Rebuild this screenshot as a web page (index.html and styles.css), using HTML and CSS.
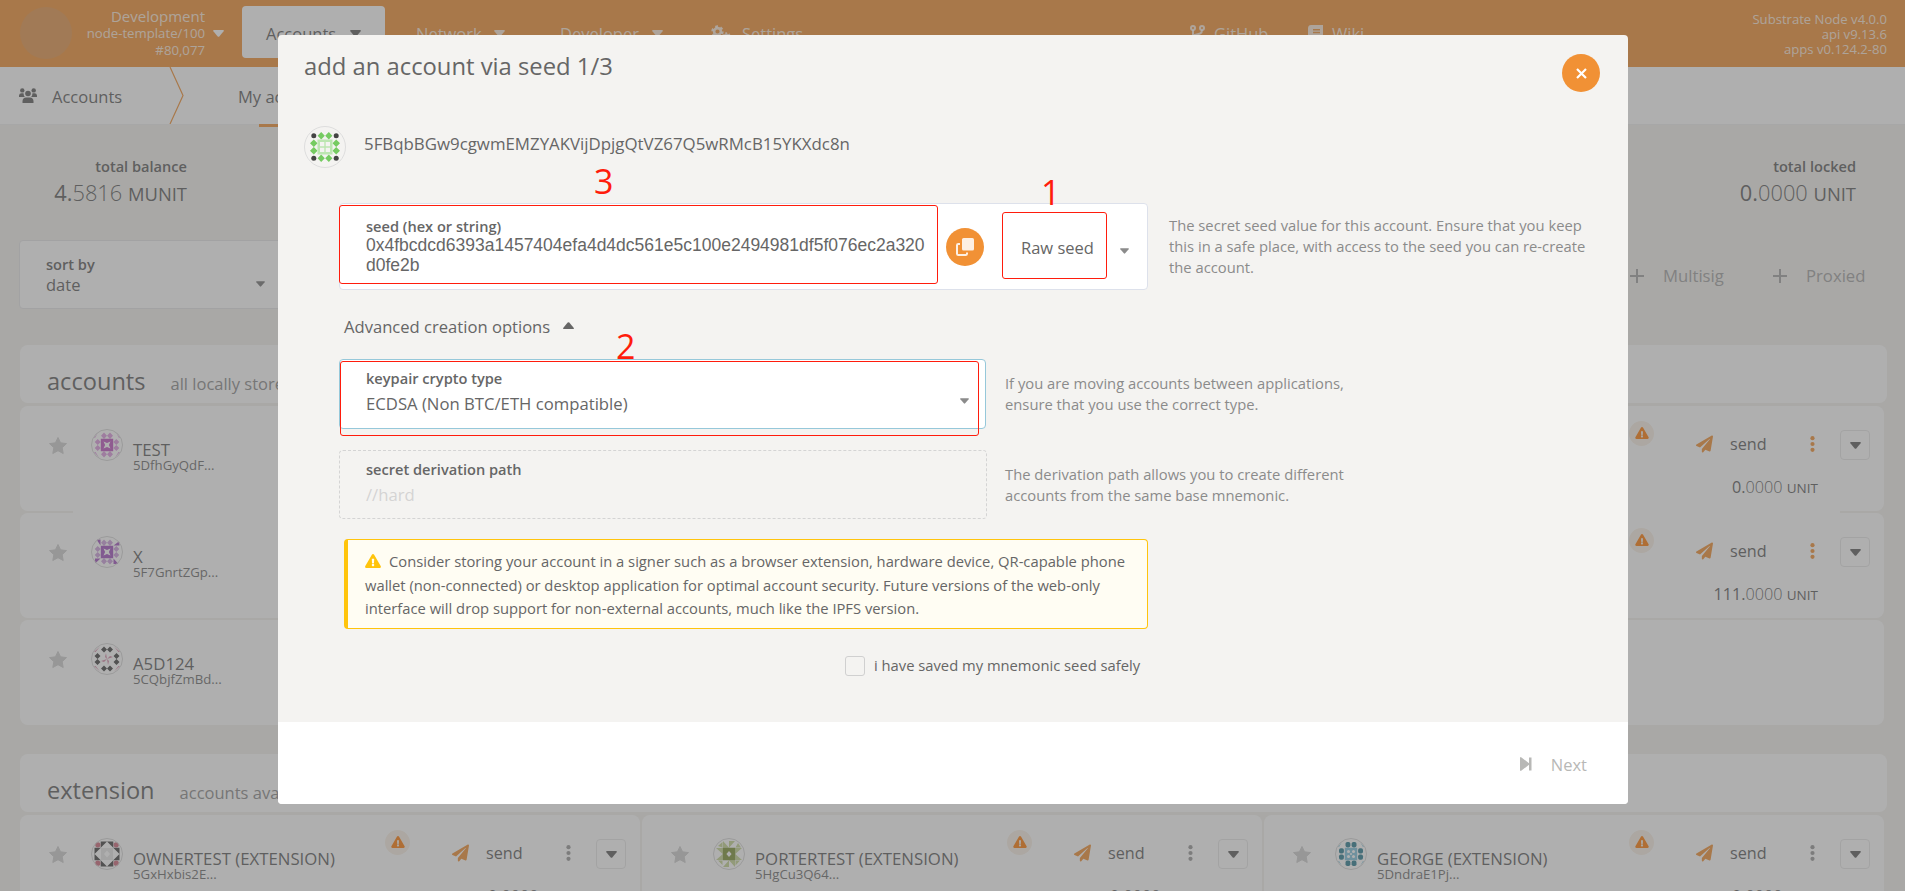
FILE: index.html
```html
<!DOCTYPE html>
<html lang="en">
<head>
<meta charset="utf-8">
<title>Accounts</title>
<link rel="stylesheet" href="styles.css">
</head>
<body>
<svg class="defs" width="0" height="0">
  <symbol id="caret" viewBox="0 0 11 7"><path d="M1 0h9q1.4 .2 .6 1.300L6.300 6.400q-.8 .8-1.600 0L.4 1.300Q-.4 .2 1 0z"/></symbol>
  <symbol id="star" viewBox="0 0 18 18"><path d="M9 .5l2.600 5.300 5.900.8-4.300 4.100 1 5.800L9 13.700l-5.200 2.800 1-5.800L.5 6.600l5.900-.8z" stroke-width="1" stroke="currentColor" stroke-linejoin="round"/></symbol>
  <symbol id="plane" viewBox="0 0 512 512"><path d="M476 3.200L12.500 270.600c-18.100 10.400-15.800 35.600 2.200 43.200L121 358.400l287.300-253.200c5.500-4.900 13.300 2.600 8.600 8.300L176 407v80.500c0 23.600 28.500 32.900 42.500 15.800L282 426l124.600 52.200c14.200 6 30.400-2.900 33-18.200l72-432C515 7.800 493.300-6.800 476 3.200z"/></symbol>
  <symbol id="dots" viewBox="0 0 5 16"><circle cx="2.500" cy="2.200" r="2.100"/><circle cx="2.500" cy="8" r="2.100"/><circle cx="2.500" cy="13.800" r="2.100"/></symbol>
  <symbol id="warn" viewBox="0 0 576 512"><path d="M569.500 440C588 472 564.800 512 527.900 512H48.100c-36.900 0-60-40.100-41.600-72L246.400 24c18.500-32 64.700-32 83.200 0l239.900 416zM288 354c-25.400 0-46 20.600-46 46s20.600 46 46 46 46-20.600 46-46-20.600-46-46-46zm-43.700-165.300l7.400 136c.4 6.400 5.600 11.300 12 11.300h48.500c6.400 0 11.600-5 12-11.300l7.400-136c.4-6.900-5.100-12.700-12-12.700h-63.400c-6.900 0-12.400 5.800-12 12.700z"/></symbol>
  <symbol id="plus" viewBox="0 0 14 14"><path d="M6 0h2v6h6v2H8v6H6V8H0V6h6z"/></symbol>
  <symbol id="id-test" viewBox="0 0 32 32"><g fill="#dd9adf"><path d="M13 3.500l3 3.200-3 3.200-3-3.200zM19 3.500l3 3.200-3 3.200-3-3.200zM13 22.100l3 3.200-3 3.200-3-3.200zM19 22.100l3 3.200-3 3.200-3-3.200zM6.700 10l3 3-3 3-3-3zM6.700 16l3 3-3 3-3-3zM25.300 10l3 3-3 3-3-3zM25.300 16l3 3-3 3-3-3zM3 9l4-5.500L4 9zM29 9l-4-5.500L28 9zM3 23l5 5.500L4.500 23zM29 23l-5 5.500 3.500-5.500z"/></g><path fill="#bf56c0" d="M9.800 9.800h12.400v12.400H9.800z"/><path fill="#fff" d="M12.500 12.500l3.500 1.600 3.500-1.600-1.600 3.500 1.600 3.500-3.500-1.600-3.500 1.600 1.600-3.500z"/></symbol>
  <symbol id="id-x" viewBox="0 0 32 32"><g fill="#cda0dd"><path d="M13 3.500l3 3.200-3 3.200-3-3.200zM19 3.500l3 3.200-3 3.200-3-3.200zM13 22.100l3 3.200-3 3.200-3-3.200zM19 22.100l3 3.200-3 3.200-3-3.200zM6.700 10l3 3-3 3-3-3zM6.700 16l3 3-3 3-3-3zM25.300 10l3 3-3 3-3-3zM25.300 16l3 3-3 3-3-3z"/></g><g fill="#a355c0"><path d="M5.500 3.500h4v6zM22.500 9.500L28.500 5v4.500zM4 22.500h5.500L4 27.500zM22.500 22.500l5 5.500h-5z"/><path d="M9.800 9.800h12.400v12.400H9.800z"/></g><path fill="#fff" d="M12.500 12.500l3.500 1.600 3.500-1.600-1.600 3.500 1.600 3.500-3.500-1.600-3.500 1.600 1.600-3.500z"/></symbol>
  <symbol id="id-a5" viewBox="0 0 32 32"><g fill="#444"><path d="M13 3.500l3 3-3 3-3-3zM19 3.500l3 3-3 3-3-3zM13 22.500l3 3-3 3-3-3zM19 22.500l3 3-3 3-3-3zM6.500 10l3 3-3 3-3-3zM6.500 16l3 3-3 3-3-3zM25.500 10l3 3-3 3-3-3zM25.500 16l3 3-3 3-3-3z"/></g><path fill="#d68aa8" d="M3 9l6-5.500L4.500 9zM29 9l-6-5.500L27.500 9zM3 23l6 5.500L4.500 23zM29 23l-6 5.500 4.500-5.500zM15 10l1 6-2-2zM22 14l-6 2 3-3zM17 22l-1-6 2 2zM10 18l6-2-3 3z"/></symbol>
  <symbol id="id-owner" viewBox="0 0 32 32"><path fill="#444" d="M9.700 3.500H16l-6.300 6.300zM22.300 3.500H16l6.300 6.300zM9.700 28.500H16l-6.300-6.300zM22.300 28.500H16l6.300-6.300zM3.500 9.700h6.300L3.500 16zM3.500 22.300h6.300L3.500 16zM28.500 9.700h-6.300l6.300 6.300zM28.500 22.300h-6.300l6.300-6.300z"/><g fill="#cf6a7d"><circle cx="6.800" cy="6.800" r="2.600"/><circle cx="25.200" cy="6.800" r="2.600"/><circle cx="6.800" cy="25.200" r="2.600"/><circle cx="25.200" cy="25.200" r="2.600"/></g><path fill="#e6e6e6" d="M10 10h12v12H10z"/><path fill="#fff" d="M16 12.500l3 3.500-3 3.500-3-3.500z"/></symbol>
  <symbol id="id-porter" viewBox="0 0 32 32"><path fill="#c4d492" d="M10 3v6.800h6zM16 3v6.800l6-6.800zM10 29l6-6.800V29zM16 22.200h6V29zM3 10h6.800v6zM3 22h6.800v-6zM29 10h-6.800v6zM29 22l-6.800-6v6zM5 8l4.500-4v5.500zM22.500 9.500H28l-3-4.500zM5 22.500h4.500V27zM22.500 22.500H27l-4.500 5z"/><path fill="#7f9438" d="M9.800 9.800h12.400v12.400H9.800z"/><path fill="#fff" d="M16 13l2.600 3-2.600 3-2.600-3z"/></symbol>
  <symbol id="id-george" viewBox="0 0 32 32"><g fill="#2f7f93"><rect x="10.500" y="4" width="4.900" height="5.400" rx="1.800"/><rect x="16.600" y="4" width="4.900" height="5.400" rx="1.800"/><rect x="10.500" y="22.600" width="4.900" height="5.400" rx="1.800"/><rect x="16.600" y="22.600" width="4.900" height="5.400" rx="1.800"/><rect x="4" y="10.200" width="4.900" height="5.400" rx="1.800"/><rect x="4" y="16.400" width="4.900" height="5.400" rx="1.800"/><rect x="23.100" y="10.200" width="4.900" height="5.400" rx="1.800"/><rect x="23.100" y="16.400" width="4.900" height="5.400" rx="1.800"/></g><path fill="#7fc3dc" d="M9.800 9.800h12.400v12.400H9.800zM3 9l4-5-3 5zM29 9l-4-5 3 5zM3 23l4 5-3-5zM29 23l-4 5 3-5z"/><g fill="#fff"><circle cx="13.500" cy="13.500" r="1.500"/><circle cx="18.500" cy="13.500" r="1.500"/><circle cx="13.500" cy="18.500" r="1.500"/><circle cx="18.500" cy="18.500" r="1.500"/><circle cx="16" cy="16" r="1"/></g></symbol>
</svg>

<div class="page">
  <header class="topbar">
    <div class="chain">
      <span class="logo"></span>
      <div class="chain-info"><div class="chain-name">Development</div><div>node-template/100</div><div>#80,077</div></div>
      <svg class="caret"><use href="#caret"/></svg>
    </div>
    <div class="nav active"><span class="w-acc">Accounts</span><svg class="caret"><use href="#caret"/></svg></div>
    <div class="nav"><span class="w-net">Network</span><svg class="caret"><use href="#caret"/></svg></div>
    <div class="nav"><span class="w-dev">Developer</span><svg class="caret"><use href="#caret"/></svg></div>
    <div class="nav">
      <svg class="gears" viewBox="0 0 20 16"><g fill="none" stroke="currentColor"><circle cx="6.500" cy="6.500" r="3.400" stroke-width="2.600"/><circle cx="6.500" cy="6.500" r="5.200" stroke-width="2" stroke-dasharray="2.700 2.700"/><circle cx="15.500" cy="11.500" r="2" stroke-width="1.800"/><circle cx="15.500" cy="11.500" r="3.400" stroke-width="1.500" stroke-dasharray="1.800 1.800"/></g></svg><span>Settings</span>
    </div>
    <div class="nav link">
      <svg class="ico15" viewBox="0 0 15 17"><g fill="none" stroke="currentColor" stroke-width="2"><circle cx="3" cy="3" r="2"/><circle cx="12" cy="3" r="2"/><circle cx="3" cy="14" r="2"/><path d="M3 5v7M12 5c0 4-3 4-8 5"/></g></svg><span>GitHub</span>
    </div>
    <div class="nav link">
      <svg class="ico15" viewBox="0 0 15 17"><path fill="currentColor" fill-rule="evenodd" d="M3 0h12v12.500h-1v3h1V17H3q-3-.3-3-3V3q.3-3 3-3zM5 4v1.400h7V4zm0 2.800v1.400h7V6.800zM3 12.500q-1.300 1.500 0 3h9v-3z"/></svg><span>Wiki</span>
    </div>
    <div class="versions"><div>Substrate Node v4.0.0</div><div>api v9.13.6</div><div>apps v0.124.2-80</div></div>
  </header>

  <nav class="tabs">
    <svg class="users" viewBox="0 0 18 15"><g fill="currentColor"><circle cx="3.300" cy="2.400" r="2.200"/><circle cx="14.700" cy="2.400" r="2.200"/><circle cx="9" cy="5.500" r="2.800"/><path d="M0 9V7.500Q.2 5.300 2.500 5.300h2Q4.600 8 6 9zM18 9V7.500q-.2-2.200-2.500-2.200h-2Q13.400 8 12 9zM3.500 15v-2q.3-3.500 3.500-3.500h4q3.200 0 3.500 3.500v2z"/></g></svg>
    <span class="tab-title">Accounts</span>
    <svg class="chevron" viewBox="0 0 16 57"><path d="M1 0l13 28.500L1 57" fill="none" stroke="#f19135" stroke-width="1.200"/></svg>
    <span class="tab">My accounts</span>
  </nav>

  <main class="content">
    <section class="summary">
      <div class="stat"><div class="stat-label">total balance</div><div class="stat-value">4.<i>5816</i> <small>MUNIT</small></div></div>
      <div class="stat"><div class="stat-label">total locked</div><div class="stat-value">0.<i>0000</i> <small>UNIT</small></div></div>
    </section>
    <section class="filters">
      <div class="sort"><div><div class="label">sort by</div><div class="sort-value">date</div></div><svg class="caret sm"><use href="#caret"/></svg></div>
      <div class="ghost"><svg class="plus"><use href="#plus"/></svg>Multisig</div>
      <div class="ghost g2"><svg class="plus"><use href="#plus"/></svg>Proxied</div>
    </section>

    <div class="table-head"><h1>accounts</h1><span>all locally stored accounts</span></div>
    <div class="rows">
      <div class="row"><svg class="star"><use href="#star"/></svg><svg class="ident"><use href="#id-test"/></svg><div class="who"><div>TEST</div><small>5DfhGyQdF...</small></div><span class="alert"><svg><use href="#warn"/></svg></span><svg class="plane"><use href="#plane"/></svg><div class="act"><div>send</div><p>0.<i>0000</i>&nbsp;<small>UNIT</small></p></div><svg class="dots on"><use href="#dots"/></svg><span class="drop"><svg class="caret"><use href="#caret"/></svg></span></div>
      <div class="row"><svg class="star"><use href="#star"/></svg><svg class="ident"><use href="#id-x"/></svg><div class="who"><div>X</div><small>5F7GnrtZGp...</small></div><span class="alert"><svg><use href="#warn"/></svg></span><svg class="plane"><use href="#plane"/></svg><div class="act"><div>send</div><p>111.<i>0000</i>&nbsp;<small>UNIT</small></p></div><svg class="dots on"><use href="#dots"/></svg><span class="drop"><svg class="caret"><use href="#caret"/></svg></span></div>
    </div>
    <div class="rows third">
      <div class="row"><svg class="star"><use href="#star"/></svg><svg class="ident"><use href="#id-a5"/></svg><div class="who"><div>A5D124</div><small>5CQbjfZmBd...</small></div></div>
    </div>

    <div class="table-head ext"><h1>extension</h1><span>accounts available via browser extensions</span></div>
    <div class="rows cols">
      <div class="row"><svg class="star"><use href="#star"/></svg><svg class="ident"><use href="#id-owner"/></svg><div class="who"><div>OWNERTEST (EXTENSION)</div><small>5GxHxbis2E...</small></div><span class="alert"><svg><use href="#warn"/></svg></span><svg class="plane"><use href="#plane"/></svg><div class="act"><div>send</div><p>0.<i>0000</i>&nbsp;<small>UNIT</small></p></div><svg class="dots"><use href="#dots"/></svg><span class="drop"><svg class="caret"><use href="#caret"/></svg></span></div>
      <div class="row"><svg class="star"><use href="#star"/></svg><svg class="ident"><use href="#id-porter"/></svg><div class="who"><div>PORTERTEST (EXTENSION)</div><small>5HgCu3Q64...</small></div><span class="alert"><svg><use href="#warn"/></svg></span><svg class="plane"><use href="#plane"/></svg><div class="act"><div>send</div><p>0.<i>0000</i>&nbsp;<small>UNIT</small></p></div><svg class="dots"><use href="#dots"/></svg><span class="drop"><svg class="caret"><use href="#caret"/></svg></span></div>
      <div class="row"><svg class="star"><use href="#star"/></svg><svg class="ident"><use href="#id-george"/></svg><div class="who"><div>GEORGE (EXTENSION)</div><small>5DndraE1Pj...</small></div><span class="alert"><svg><use href="#warn"/></svg></span><svg class="plane"><use href="#plane"/></svg><div class="act"><div>send</div><p>0.<i>0000</i>&nbsp;<small>UNIT</small></p></div><svg class="dots"><use href="#dots"/></svg><span class="drop"><svg class="caret"><use href="#caret"/></svg></span></div>
    </div>
  </main>
</div>

<div class="overlay">
  <div class="modal">
    <div class="modal-head"><h2>add an account via seed 1/3</h2><span class="round"><svg width="11" height="11" viewBox="0 0 11 11"><path d="M1 1l9 9M10 1l-9 9" stroke="#fff" stroke-width="2.200"/></svg></span></div>
    <div class="address">
      <svg class="big-ident" viewBox="0 0 42 42"><circle cx="21" cy="21" r="20.500" fill="#f4f3f1" stroke="#ddd"/><g fill="#444"><circle cx="9.800" cy="9.800" r="2.500"/><circle cx="32.200" cy="9.800" r="2.500"/><circle cx="9.800" cy="32.200" r="2.500"/><circle cx="32.200" cy="32.200" r="2.500"/></g><path fill="#76cb62" d="M17.200 6l3.600 3.800-3.600 3.700-3.600-3.700zM24.800 6l3.600 3.800-3.600 3.700-3.600-3.700zM17.200 28.500l3.600 3.700-3.600 3.800-3.600-3.800zM24.800 28.500l3.600 3.700-3.600 3.800-3.600-3.800zM9.800 13.500l3.700 3.700-3.700 3.800-3.800-3.800zM9.800 21l3.700 3.800-3.700 3.700L6 24.800zM32.200 13.500l3.800 3.700-3.800 3.800-3.700-3.800zM32.200 21l3.800 3.800-3.800 3.700-3.700-3.700z"/><path fill="#bce6b1" fill-rule="evenodd" d="M13.500 13.500h15v15h-15zM16 16v4.300h4.300V16zm5.700 0v4.300H26V16zM16 21.700V26h4.300v-4.300zm5.700 0V26H26v-4.300z"/></svg>
      <span>5FBqbBGw9cgwmEMZYAKVijDpjgQtVZ67Q5wRMcB15YKXdc8n</span>
    </div>
    <div class="field seed-row">
      <div class="box seed">
        <div class="seed-text"><div class="label">seed (hex or string)</div><div class="mono">0x4fbcdcd6393a1457404efa4d4dc561e5c100e2494981df5f076ec2a320<br>d0fe2b</div></div>
        <span class="round copy"><svg width="18" height="18" viewBox="0 0 18 18"><rect x="6" y="0" width="12" height="12.500" rx="1.600" fill="#fdf0e4"/><path d="M4 6H2.300Q1 6 1 7.300v8.400Q1 17 2.300 17h7.400q1.300 0 1.300-1.300V14.500" fill="none" stroke="#fdf0e4" stroke-width="2"/></svg></span>
        <span class="raw">Raw seed</span><svg class="caret sm grey"><use href="#caret"/></svg>
      </div>
      <div class="help">The secret seed value for this account. Ensure that you keep<br>this in a safe place, with access to the seed you can re-create<br>the account.</div>
    </div>
    <div class="advanced">Advanced creation options<svg class="caret up"><use href="#caret"/></svg></div>
    <div class="field crypto-row">
      <div class="box crypto"><div><div class="label">keypair crypto type</div><div class="value">ECDSA (Non BTC/ETH compatible)</div></div><svg class="caret sm grey"><use href="#caret"/></svg></div>
      <div class="help">If you are moving accounts between applications,<br>ensure that you use the correct type.</div>
    </div>
    <div class="field path-row">
      <div class="box path"><div><div class="label">secret derivation path</div><div class="value faint">//hard</div></div></div>
      <div class="help">The derivation path allows you to create different<br>accounts from the same base mnemonic.</div>
    </div>
    <div class="warning"><svg class="tri"><use href="#warn"/></svg>Consider storing your account in a signer such as a browser extension, hardware device, QR-capable phone<br>wallet (non-connected) or desktop application for optimal account security. Future versions of the web-only<br>interface will drop support for non-external accounts, much like the IPFS version.</div>
    <div class="confirm"><span class="check"></span><span class="confirm-text">i have saved my mnemonic seed safely</span></div>
    <div class="footer"><svg class="next-ico" viewBox="0 0 12 14"><path d="M0 1Q.2-.4 1.500.4L9 6.200V.4h2.500v13.200H9V7.800l-7.500 5.800Q.2 14.400 0 13z"/></svg><span>Next</span></div>
  </div>
</div>

<div class="mark m-seed"></div>
<div class="mark m-raw"></div>
<div class="mark m-type"></div>
<span class="num n3">3</span>
<span class="num n1">1</span>
<span class="num n2">2</span>
</body>
</html>
```
FILE: styles.css
```css
* { box-sizing: border-box; }
html, body { margin: 0; height: 891px; overflow: hidden; }
body { font-family: "Open Sans", "Noto Sans", sans-serif; color: #5e5e5e; font-size: 16px; background: #f3f1ed; }
h1, h2, p { margin: 0; font-weight: 400; }
i { font-style: normal; font-weight: 300; }
svg { display: block; flex: none; fill: currentColor; }
.defs { position: absolute; }
.caret { width: 11px; height: 7px; }
.caret.sm { width: 9px; height: 6px; }
.caret.grey { color: #8b8b8b; }
.page { height: 891px; overflow: hidden; }

.topbar { display: grid; grid-template-columns: 242px 150px 144px 151px 503px 118px 100px 1fr; height: 67px; background: #f19135; color: rgba(255,255,255,.8); }
.chain { display: flex; align-items: center; padding-left: 20px; height: 66px; }
.logo { width: 52px; height: 52px; border-radius: 50%; background: #e2954c; }
.chain-info { width: 133px; text-align: right; font-size: 13.200px; line-height: 17px; padding-top: 1px; }
.chain-name { font-size: 15px; }
.chain .caret { margin-left: 8px; color: #fff; }
.nav { display: flex; align-items: center; height: 52px; margin-top: 6px; padding: 2px 0 0 24px; font-size: 16.500px; }
.nav.active { width: 143px; background: #fff; border-radius: 4px; color: #5e5e5e; }
.w-acc { width: 84px; } .w-net { width: 78px; } .w-dev { width: 92px; }
.gears { width: 20px; height: 16px; margin-right: 11px; }
.nav.link { padding-left: 0; }
.ico15 { width: 15px; height: 17px; margin-right: 9px; }
.versions { padding: 12px 18px 0 0; text-align: right; font-size: 13.100px; line-height: 15px; white-space: nowrap; }

.tabs { display: flex; align-items: center; height: 58px; background: #fff; padding-left: 19px; border-bottom: 1px solid #eee; }
.users { width: 18px; height: 15px; margin-right: 15px; }
.tab-title { width: 117px; font-size: 16.500px; padding-top: 1px; }
.chevron { width: 16px; height: 57px; }
.tab { height: 60px; line-height: 59px; margin: 3px 0 0 53px; font-size: 16.500px; background: linear-gradient(#f19135, #f19135) 21px 100% / 100px 3px no-repeat; }

.content { padding: 0 19px; }
.summary { display: flex; justify-content: space-between; padding: 31px 30px 0 0; height: 115px; }
.stat { text-align: right; width: 168px; }
.stat-label, .label { font-size: 14.600px; font-weight: 600; line-height: 20px; }
.stat-value { font-size: 21.800px; line-height: 33px; white-space: nowrap; }
.stat-value small { font-size: 18.400px; }
.filters { display: flex; align-items: center; height: 69px; }
.sort { flex: none; display: flex; justify-content: space-between; align-items: center; width: 400px; height: 69px; padding: 0 153px 0 26px; border: 1px solid #e4e4e6; border-radius: 4px; background: #fff; }
.sort .caret { margin-top: 18px; color: #777; }
.sort-value { font-size: 16.500px; line-height: 22px; }
.ghost { flex: none; display: flex; align-items: center; width: 143px; margin-left: 1211px; padding-top: 2px; font-size: 16.700px; color: #a2a2a2; }
.ghost.g2 { margin-left: 0; width: 100px; }
.plus { width: 14px; height: 14px; margin-right: 19px; }

.table-head { display: flex; align-items: baseline; width: 1867px; height: 58px; margin: 36px 0 3px 1px; padding: 19px 28px 0 27px; background: #fff; border-radius: 8px; white-space: nowrap; }
.table-head h1 { font-size: 23.600px; line-height: 34px; margin-right: 25px; }
.table-head span { font-size: 16.500px; color: #8c8c8c; }
.rows { display: grid; row-gap: 2px; margin-left: 1px; width: 1864px; background: linear-gradient(#fff, #fff) 53px 0 / 1767px 100% no-repeat; }
.row { display: flex; height: 105px; padding: 23px 14px 0 29px; border-radius: 8px; background: #fff; }
.star { width: 18px; height: 18px; margin-top: 8px; color: #cfcfcf; }
.ident { width: 32px; height: 32px; margin-left: 24px; outline: 1px solid #d6d6d6; outline-offset: -1px; border-radius: 50%; }
.who { flex: 1; margin: 12px 0 0 10px; font-size: 16.800px; line-height: 17px; white-space: nowrap; }
.who small, .who div { display: block; }
.who small { font-size: 13.200px; color: #6e6e6e; line-height: 15px; }
.alert { display: flex; justify-content: center; padding-top: 6px; width: 25px; height: 25px; margin: -8px 42px 0 0; border-radius: 50%; background: #f9efe4; color: #ff7d0a; }
.alert svg { width: 14px; height: 12px; }
.plane { width: 17px; height: 18px; margin-top: 6px; color: #f19135; }
.act { width: 106px; padding-left: 17px; font-size: 16.200px; line-height: 31px; }
.act p { display: flex; justify-content: flex-end; align-items: baseline; width: 88px; margin-top: 12px; white-space: nowrap; line-height: 31px; }
.act p small { font-size: 13.500px; }
.dots { width: 5px; height: 16px; margin: 7px 25px 0 -9px; color: #999; }
.dots.on { color: #f19135; }
.drop { display: flex; align-items: center; justify-content: center; width: 30px; height: 30px; margin-top: 1px; border: 1px solid #e6e6e6; border-radius: 4px; }
.third { margin-top: 2px; }
.ext { margin-top: 29px; }
.cols { grid-template-columns: repeat(3, 620px); column-gap: 2px; background: none; }

.overlay { position: absolute; inset: 0; background: rgba(96,96,96,.5); }
.modal { width: 1350px; height: 769px; margin: 35px 0 0 278px; padding-top: 1px; border-radius: 4px; background: #f4f3f1; color: #666; overflow: hidden; }
.modal-head { display: flex; justify-content: space-between; padding: 0 28px 0 26px; height: 90px; }
.modal-head h2 { font-size: 23.800px; line-height: 60px; }
.round { display: flex; align-items: center; justify-content: center; flex: none; width: 38px; height: 38px; border-radius: 50%; background: #f19135; }
.modal-head .round { margin-top: 18px; }
.address { display: flex; height: 77px; padding-left: 26px; font-size: 16.850px; line-height: 35px; }
.big-ident { width: 42px; height: 42px; margin-right: 18px; }
.field { display: flex; padding-left: 61px; white-space: nowrap; }
.box { display: flex; flex: none; padding-left: 26px; border: 1px solid #dde1eb; border-radius: 4px; background: #fff; }
.seed { width: 809px; height: 87px; padding-top: 12px; }
.seed-text { width: 580px; }
.mono { font-family: "Liberation Sans", Arial, sans-serif; font-size: 17.500px; line-height: 20px; margin-top: -1px; }
.copy { margin-top: 12px; }
.raw { width: 99px; margin: 20px 0 0 37px; font-size: 16.500px; line-height: 24px; }
.seed .sm { margin-top: 32px; }
.help { font-size: 14.780px; color: #8b8b8b; line-height: 21px; margin-left: 19px; }
.seed-row .help { margin: 12px 0 0 21px; }
.advanced { display: flex; align-items: center; height: 31px; margin: 21px 0 17px 66px; font-size: 16.600px; line-height: 31px; }
.up { transform: rotate(180deg); margin: -3px 0 0 13px; }
.crypto { width: 647px; height: 70px; padding: 8px 16px 0 26px; justify-content: space-between; border-color: #96c8da; }
.value { font-size: 16.700px; line-height: 26px; margin-top: 3px; }
.faint { color: #d4d4d4; }
.crypto .sm { margin-top: 30px; }
.crypto-row .help, .path-row .help { margin-top: 14px; }
.path-row .help { margin-left: 18px; }
.path-row { margin-top: 21px; }
.path { width: 648px; height: 69px; padding-top: 8px; background: none; border: 1px dashed #d4d4d4; }
.warning { width: 804px; height: 90px; margin: 20px 0 0 66px; padding: 10px 0 0 17px; border: 1px solid #ffc40c; border-left-width: 4px; border-radius: 4px; background: #fffdf3; font-size: 14.750px; line-height: 23.600px; white-space: nowrap; }
.tri { display: inline-block; width: 16px; height: 14px; margin-right: 8px; vertical-align: -1px; color: #ffc40c; }
.confirm { display: flex; align-items: center; height: 20px; margin: 27px 0 46px 567px; }
.check { width: 20px; height: 20px; margin-right: 9px; border: 1px solid #d0d0d0; border-radius: 3px; }
.confirm-text { font-size: 14.750px; line-height: 18px; margin-top: -2px; }
.footer { display: flex; align-items: center; justify-content: flex-end; height: 83px; padding: 2px 41px 0 0; background: #fff; font-size: 16.500px; color: #b8b8b6; }
.next-ico { width: 12px; height: 14px; margin-right: 19px; margin-top: -2px; }

.mark { position: absolute; border: 1px solid #ff1c0c; border-radius: 3px; }
.m-seed { left: 339px; top: 205px; width: 599px; height: 79px; }
.m-raw { left: 1002px; top: 212px; width: 105px; height: 67px; }
.m-type { left: 340px; top: 361px; width: 639px; height: 75px; }
.num { position: absolute; color: #ff1c0c; font-size: 34px; line-height: 34px; }
.n3 { left: 594px; top: 164px; }
.n1 { left: 1041px; top: 175px; }
.n2 { left: 616px; top: 329px; }
```
